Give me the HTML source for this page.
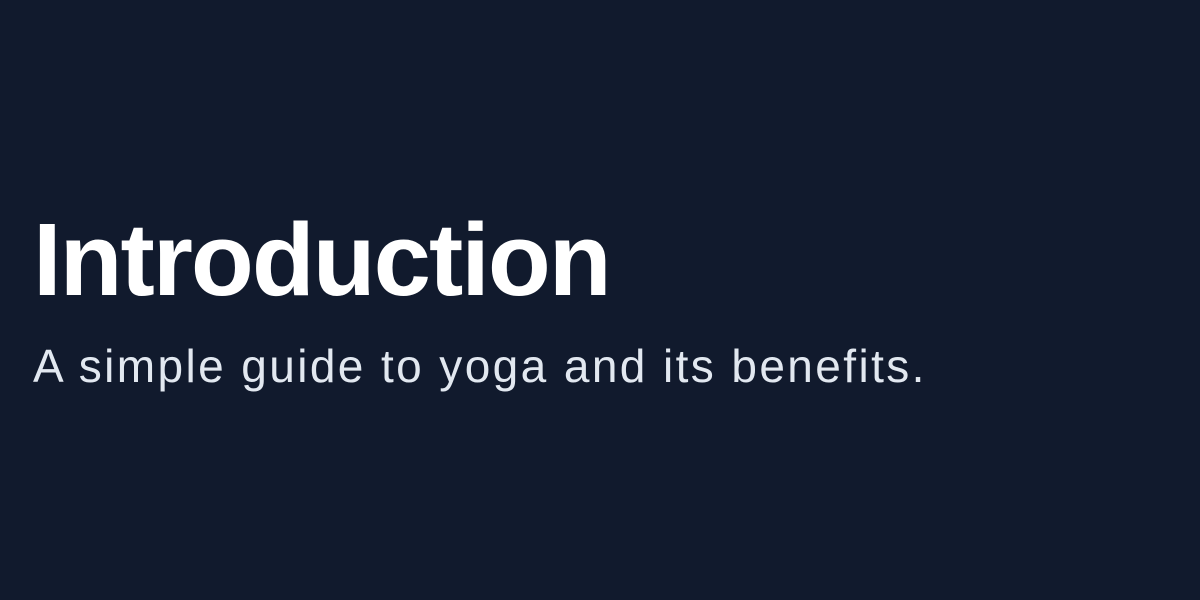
<!DOCTYPE html>
<html><head><meta charset="utf-8"><style>
html,body{margin:0;padding:0}
body{width:1200px;height:600px;background:#111a2d;position:relative;overflow:hidden;font-family:"Liberation Sans",sans-serif}
h1{position:absolute;left:33px;top:198px;margin:0;font-size:103px;font-weight:700;color:#fff;letter-spacing:-2px;line-height:1.2;white-space:nowrap}
p{position:absolute;left:33px;top:339px;margin:0;font-size:46px;color:#e2e8f0;letter-spacing:2.4px;line-height:1.2;white-space:nowrap}
</style></head><body>
<h1>Introduction</h1>
<p>A simple guide to yoga and its benefits.</p>
</body></html>
